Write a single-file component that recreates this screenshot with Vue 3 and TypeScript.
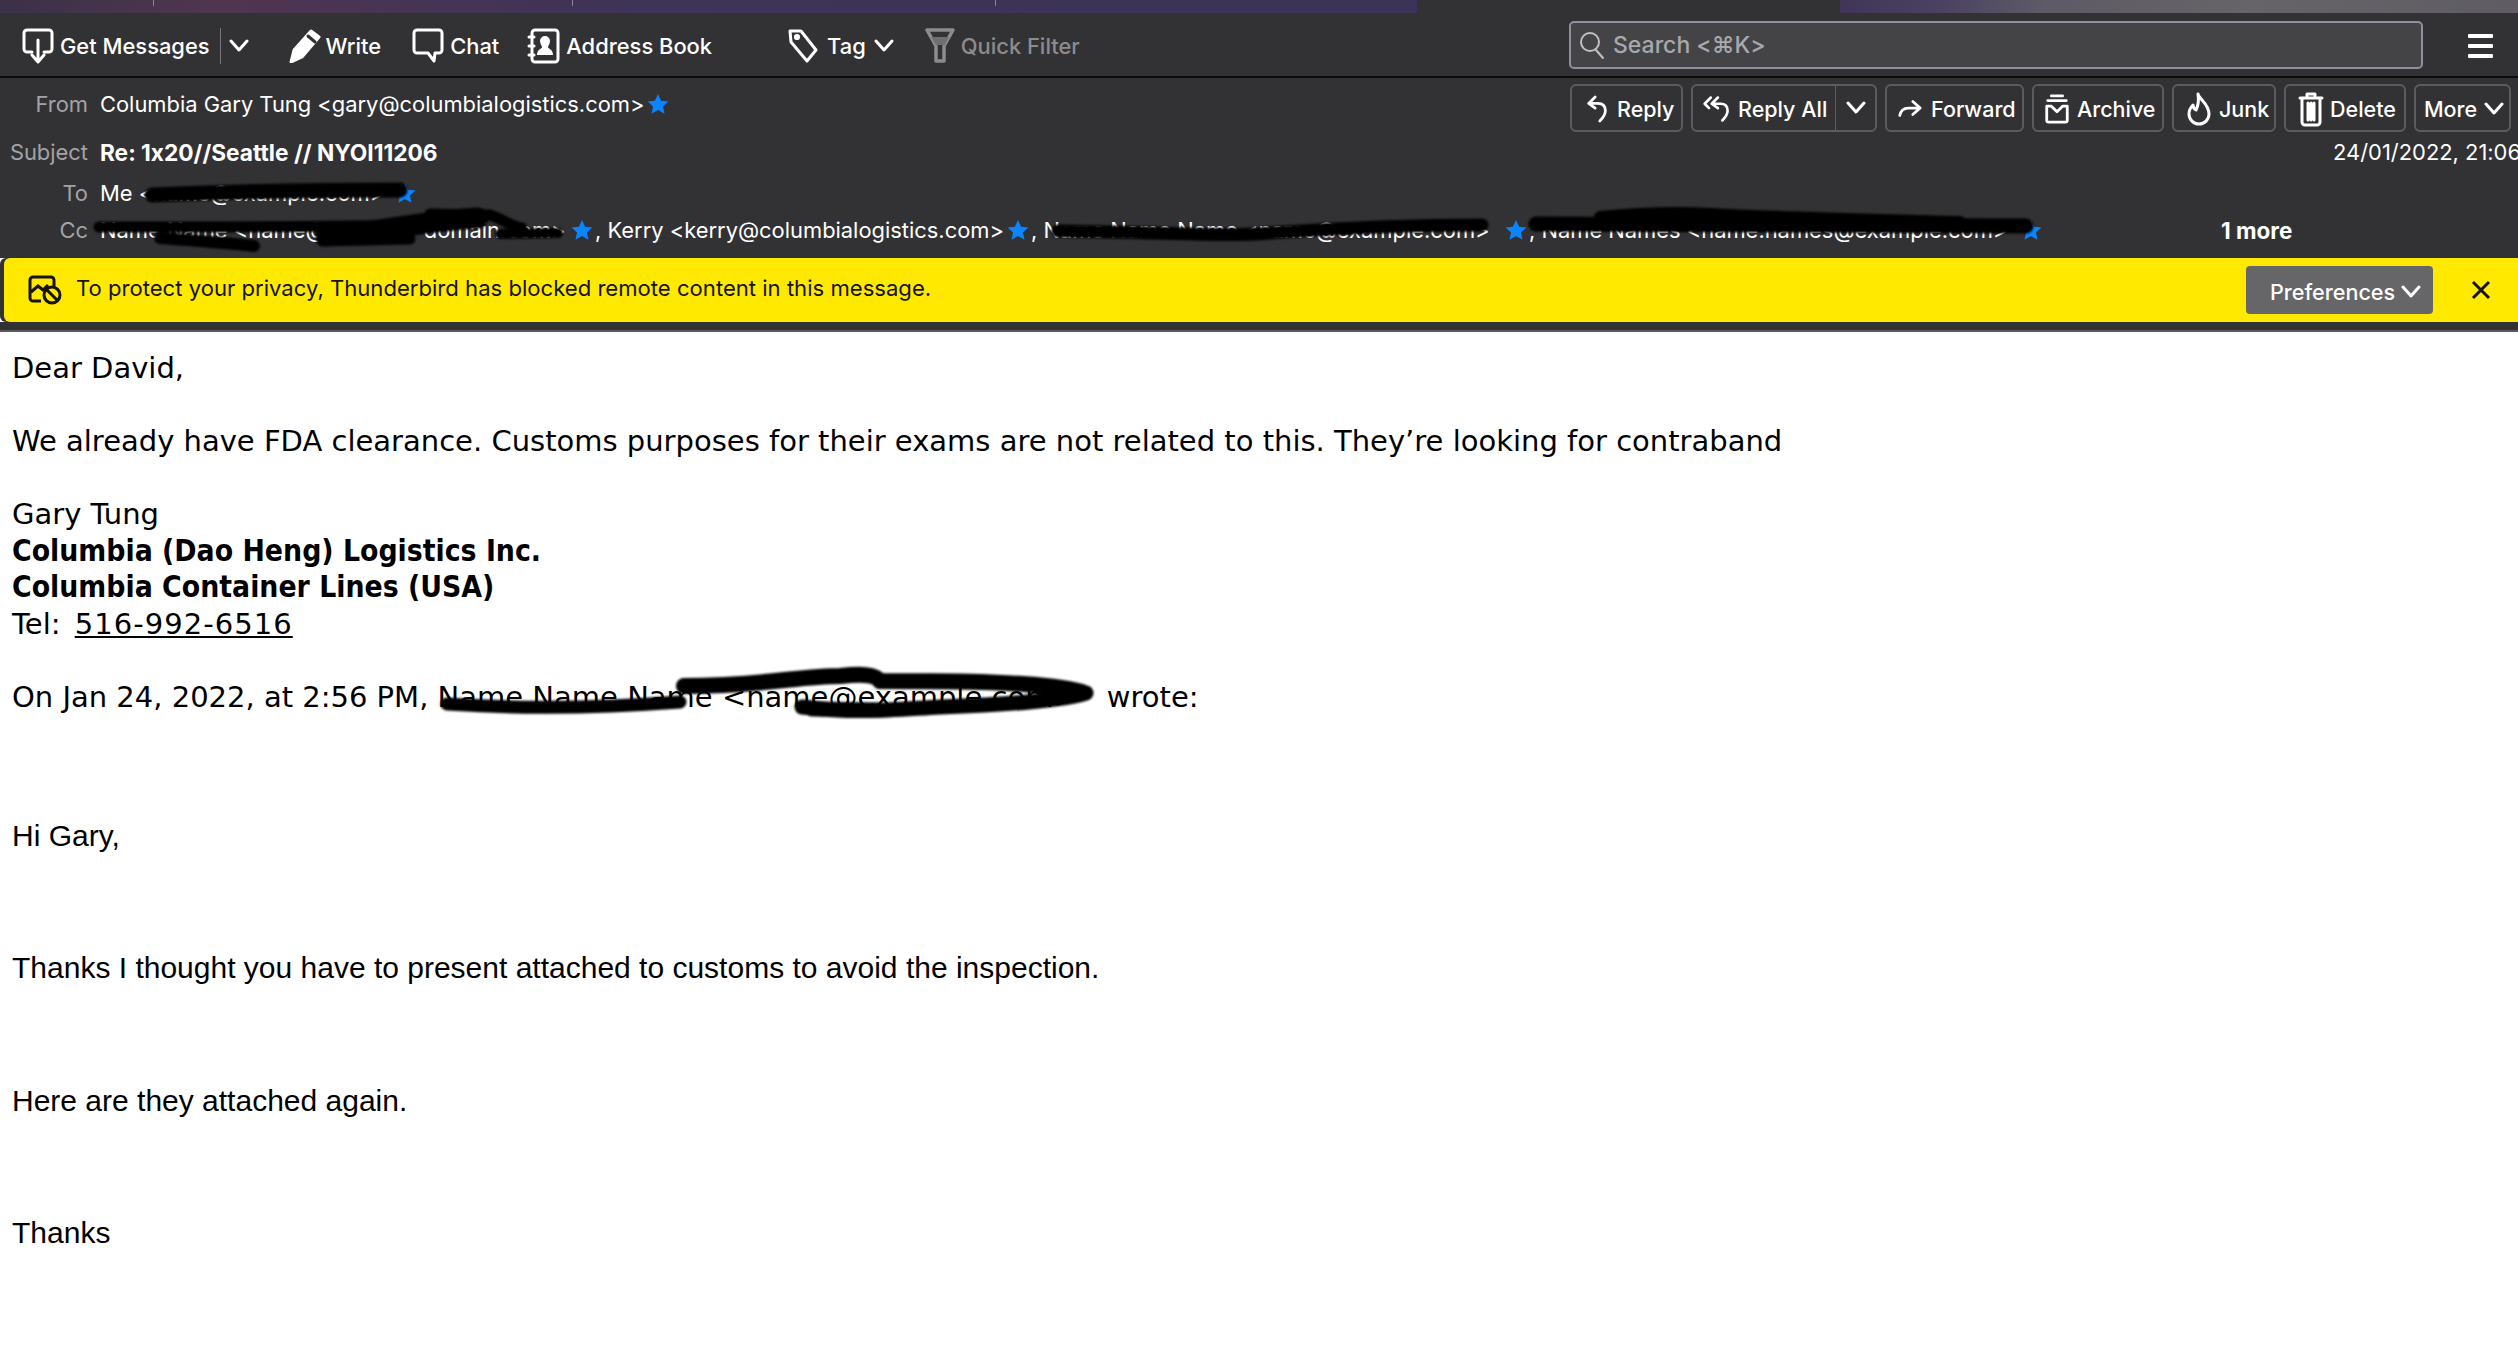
<script setup lang="ts">
interface Act { label: string; icon: string; width: number; split?: boolean }
const actions: Act[] = [
  { label: 'Reply', icon: 'reply', width: 113 },
  { label: 'Reply All', icon: 'replyall', width: 186, split: true },
  { label: 'Forward', icon: 'forward', width: 139 },
  { label: 'Archive', icon: 'archive', width: 132 },
  { label: 'Junk', icon: 'junk', width: 104 },
  { label: 'Delete', icon: 'delete', width: 122 },
  { label: 'More', icon: 'more', width: 97 },
]
const body2 = ['Hi Gary,', 'Thanks I thought you have to present attached to customs to avoid the inspection.', 'Here are they attached again.', 'Thanks']
</script>

<template>
  <div class="page">
    <div class="titlebar">
      <div class="strip left"><i class="tick" style="margin-left:153px"></i><i class="tick" style="margin-left:418px"></i><i class="tick" style="margin-left:422px"></i></div>
      <div class="strip gap"></div>
      <div class="strip right"></div>
    </div>

    <div class="toolbar">
      <div class="tool first">
        <svg width="34" height="36" viewBox="0 0 34 36" class="ic"><path d="M11 24H6a3 3 0 0 1-3-3V5a3 3 0 0 1 3-3h22a3 3 0 0 1 3 3v16a3 3 0 0 1-3 3h-5M17 12v21M11 27l6 7 6-7" /></svg>
        <span>Get Messages</span>
      </div>
      <i class="tooldiv"></i>
      <svg class="chev tchev" width="20" height="14" viewBox="0 0 20 14"><path d="M2 2l8 9 8-9" /></svg>
      <div class="tool write">
        <svg width="32" height="34" viewBox="0 0 32 34" class="ic"><path class="fill" d="M22 2l8 6-17 20-11 5 3-12z" /><path class="cut" d="M19 7l7 6" /></svg>
        <span>Write</span>
      </div>
      <div class="tool chat">
        <svg width="34" height="36" viewBox="0 0 34 36" class="ic"><path d="M6 2h22a3 3 0 0 1 3 3v17a3 3 0 0 1-3 3h-4l-1 8-6-8H6a3 3 0 0 1-3-3V5a3 3 0 0 1 3-3z" /></svg>
        <span>Chat</span>
      </div>
      <div class="tool book">
        <svg width="34" height="36" viewBox="0 0 34 36" class="ic"><rect x="5" y="2" width="26" height="32" rx="3" /><path class="fill nostroke" d="M18 8a5 5 0 0 1 5 5c0 3-2 5-2 6 0 2 5 2 5 8H10c0-6 5-6 5-8 0-1-2-3-2-6a5 5 0 0 1 5-5z" /><path d="M2 9h5M2 18h5M2 27h5" /></svg>
        <span>Address Book</span>
      </div>
      <div class="tool tag">
        <svg width="32" height="36" viewBox="0 0 32 36" class="ic"><path d="M3 3h11l15 19-9 11L4 14z" /><circle cx="10" cy="9" r="1.6" /></svg>
        <span>Tag</span>
        <svg class="chev" width="20" height="14" viewBox="0 0 20 14"><path d="M2 2l8 9 8-9" /></svg>
      </div>
      <div class="tool filter">
        <svg width="30" height="36" viewBox="0 0 30 36" class="filt"><path d="M2 2h26l-9 16v15h-8V18z" /><path class="shade" d="M6 9h18l-5 9v-1h-8z" /></svg>
        <span>Quick Filter</span>
      </div>
      <div class="search">
        <svg width="26" height="30" viewBox="0 0 26 30" class="srch"><circle cx="11" cy="12" r="9" /><path d="M17 20l7 8" /></svg>
        <span>Search &lt;⌘K&gt;</span>
      </div>
      <div class="burger"><i></i><i></i><i></i></div>
    </div>
    <div class="rule"></div>

    <div class="header">
      <div class="left-col">
        <div class="row r-from"><span class="lab">From</span><span class="val">Columbia Gary Tung &lt;gary@columbialogistics.com&gt;</span><svg class="star" width="22" height="22" viewBox="0 0 24 24"><path d="M12 1l3.400 7.400 8 .9-6 5.400 1.700 8L12 18.600l-7.100 4.100 1.700-8-6-5.400 8-.9z" /></svg></div>
        <div class="row r-subj"><span class="lab">Subject</span><span class="val subj">Re: 1x20//Seattle // NYOI11206</span></div>
        <div class="row r-to"><span class="lab">To</span><span class="val to-val">Me &lt;name@example.com&gt;</span><svg class="star" width="22" height="22" viewBox="0 0 24 24"><path d="M12 1l3.400 7.400 8 .9-6 5.400 1.700 8L12 18.600l-7.100 4.100 1.700-8-6-5.400 8-.9z" /></svg></div>
      </div>
      <div class="right-col">
        <div class="actions">
          <div v-for="a in actions" :key="a.label" class="act" :class="'a-' + a.icon" :style="{ width: a.width + 'px' }">
            <svg v-if="a.icon === 'reply'" width="26" height="30" viewBox="0 0 28 30" class="ic"><path d="M12 2L5 9l7 5M5 9h10c6 0 8 4 8 8 0 4-3 8-6 11" /></svg>
            <svg v-else-if="a.icon === 'replyall'" width="30" height="30" viewBox="0 0 34 30" class="ic"><path d="M10 2L3 9l5 5M18 2l-7 7 7 5M11 9h10c6 0 8 4 8 8 0 4-3 8-6 11" /></svg>
            <svg v-else-if="a.icon === 'forward'" width="26" height="24" viewBox="0 0 28 24" class="ic"><path d="M17 4l8 7-8 7M25 11H12c-5 0-8 3-9 8" /></svg>
            <svg v-else-if="a.icon === 'archive'" width="28" height="32" viewBox="0 0 30 32" class="ic"><path d="M9 2h12M5 7h20M4 13h5l6 6 6-6h5v15a2 2 0 0 1-2 2H6a2 2 0 0 1-2-2z" /></svg>
            <svg v-else-if="a.icon === 'junk'" width="26" height="34" viewBox="0 0 26 34" class="ic"><path d="M12 2c1 5 11 10 11 20a10 10 0 0 1-20 0c0-4 2-7 4-9 0 3 1 4 3 5 2-4 3-10 2-16z" /></svg>
            <svg v-else-if="a.icon === 'delete'" width="26" height="36" viewBox="0 0 26 36" class="ic"><path d="M2 7h22M9 7V3h8v4M4 7v24a3 3 0 0 0 3 3h12a3 3 0 0 0 3-3V7M10 12v17M13 12v17M16 12v17" /></svg>
            <span>{{ a.label }}</span>
            <svg v-if="a.icon === 'more'" class="chev" width="20" height="14" viewBox="0 0 20 14"><path d="M2 2l8 9 8-9" /></svg>
            <template v-if="a.split"><i class="split"></i><svg class="chev splitchev" width="20" height="14" viewBox="0 0 20 14"><path d="M2 2l8 9 8-9" /></svg></template>
          </div>
        </div>
        <div class="date">24/01/2022, 21:06</div>
      </div>
    </div>

    <div class="cc-row">
      <span class="lab">Cc</span>
      <span class="val cc1">Name Name &lt;name@example-domain.com&gt;</span>
      <svg class="star" width="22" height="22" viewBox="0 0 24 24"><path d="M12 1l3.400 7.400 8 .9-6 5.400 1.700 8L12 18.600l-7.100 4.100 1.700-8-6-5.400 8-.9z" /></svg>
      <span class="val cc2">, Kerry &lt;kerry@columbialogistics.com&gt;</span>
      <svg class="star" width="22" height="22" viewBox="0 0 24 24"><path d="M12 1l3.400 7.400 8 .9-6 5.400 1.700 8L12 18.600l-7.100 4.100 1.700-8-6-5.400 8-.9z" /></svg>
      <span class="val cc3">, Name Name Name &lt;name@example.com&gt;</span>
      <svg class="star" width="22" height="22" viewBox="0 0 24 24"><path d="M12 1l3.400 7.400 8 .9-6 5.400 1.700 8L12 18.600l-7.100 4.100 1.700-8-6-5.400 8-.9z" /></svg>
      <span class="val cc4">, Name Names &lt;name.names@example.com&gt;</span>
      <svg class="star" width="22" height="22" viewBox="0 0 24 24"><path d="M12 1l3.400 7.400 8 .9-6 5.400 1.700 8L12 18.600l-7.100 4.100 1.700-8-6-5.400 8-.9z" /></svg>
      <b class="more">1 more</b>
    </div>

    <div class="notice">
      <svg class="nic" width="34" height="30" viewBox="0 0 34 30"><path d="M13 26H5a3 3 0 0 1-3-3V5a3 3 0 0 1 3-3h18a3 3 0 0 1 3 3v6M3 17l7-6 5 4 5-5" /><circle cx="24" cy="20" r="8" /><path d="M18 14l12 12" /></svg>
      <span class="ntext">To protect your privacy, Thunderbird has blocked remote content in this message.</span>
      <div class="prefs"><span>Preferences</span><svg class="chev" width="20" height="14" viewBox="0 0 20 14"><path d="M2 2l8 9 8-9" /></svg></div>
      <svg class="close" width="20" height="20" viewBox="0 0 20 20"><path d="M2 2l16 16M18 2L2 18" /></svg>
    </div>
    <div class="sep"></div>

    <div class="mail">
      <div class="plain">
        <div>Dear David,</div>
        <div class="blank"></div>
        <div>We already have FDA clearance. Customs purposes for their exams are not related to this. They’re looking for contraband</div>
        <div class="blank"></div>
        <div>Gary Tung</div>
        <div><b>Columbia (Dao Heng) Logistics Inc.</b></div>
        <div><b>Columbia Container Lines (USA)</b></div>
        <div>Tel: <u>516-992-6516</u></div>
        <div class="blank"></div>
        <div>On Jan 24, 2022, at 2:56 PM, <span class="redacted">Name Name Name &lt;name@example.com&gt;</span> wrote:</div>
      </div>
      <div class="html">
        <p v-for="t in body2" :key="t">{{ t }}</p>
      </div>
    </div>

    <svg class="scribbles" width="2518" height="760" viewBox="0 0 2518 760">
      <g fill="none" stroke="#000" stroke-linecap="round" stroke-linejoin="round" filter="url(#bl)">
        <path stroke-width="15" d="M152 195C220 192 300 190 400 190" />
        <path stroke-width="11" d="M99 227C200 227 320 227 420 225" />
        <path stroke-width="12" d="M160 238C200 241 240 244 254 246" />
        <path stroke-width="21" d="M326 236C380 232 430 220 478 218" />
        <path stroke-width="11" d="M322 241 410 239M430 214 490 215C505 220 510 226 522 228" />
        <path stroke-width="10" d="M500 234 558 233" />
        <path stroke-width="13" d="M1058 231C1150 232 1230 237 1270 233 1340 228 1420 225 1482 225" />
        <path stroke-width="15" d="M1536 224 2026 226" />
        <path stroke-width="12" d="M1600 217C1640 213 1680 212 1710 214 1760 217 1850 219 1960 222" />
        <path stroke-width="13" d="M447 704C520 709 600 708 680 702" />
        <path stroke-width="16" d="M684 686C760 686 800 676 840 676 860 674 875 674 880 681 950 681 1040 681 1082 692" />
        <path stroke-width="15" d="M802 707C860 714 900 709 940 707 1000 705 1060 701 1086 693" />
        <path stroke-width="15" d="M812 709 880 710" />
      </g>
      <filter id="bl"><feGaussianBlur stdDeviation="1.2" /></filter>
    </svg>
  </div>
</template>

<style>
html, body { margin: 0; background: #fff; overflow: hidden; }
</style>
<style scoped>
.page { position: relative; width: 2518px; height: 1352px; overflow: hidden; background: #fff; font-family: Inter, "Liberation Sans", sans-serif; font-feature-settings: "calt" 0; color: #fff; }
.titlebar { display: flex; height: 13px; background: #323234; }
.strip { height: 100%; display: flex; align-items: flex-start; }
.strip.left { width: 1417px; background: linear-gradient(90deg, #3b3148 0, #4f3550 15%, #3e3358 45%, #3c3358 100%); }
.strip.gap { width: 423px; }
.strip.right { flex: 1; background: linear-gradient(90deg, #403558 0, #4b4262 15%, #5e5a66 30%, #666468 60%, #5f5c64 100%); }
.tick { width: 1px; height: 6px; background: #8a8296; }
.toolbar { display: flex; align-items: center; height: 63px; box-sizing: border-box; padding-top: 2px; background: #323234; font-size: 21.900px; font-weight: 500; position: relative; }
.tool { display: flex; align-items: center; gap: 5px; white-space: nowrap; }
.first { margin-left: 21px; }
.write { margin-left: 40px; }
.chat { margin-left: 30px; }
.book { margin-left: 28px; }
.tag { margin-left: 75px; gap: 8px; }
.filter { margin-left: 31px; gap: 6px; color: #8c8c8f; }
.ic { fill: none; stroke: #fff; stroke-width: 3; stroke-linecap: round; stroke-linejoin: round; flex: none; }
.ic .fill { fill: #fff; }
.ic .nostroke { stroke: none; }
.ic .cut { stroke: #323234; }
.chev { fill: none; stroke: #fff; stroke-width: 3; stroke-linecap: round; stroke-linejoin: round; flex: none; }
.tooldiv { width: 1px; height: 36px; background: #77777a; margin-left: 10px; }
.tchev { margin-left: 8px; }
.filt { fill: none; stroke: #8c8c8f; stroke-width: 3.500; stroke-linejoin: round; flex: none; }
.filt .shade { fill: #6f6f72; stroke: none; }
.search { display: flex; align-items: center; gap: 8px; position: absolute; left: 1569px; top: 8px; width: 854px; height: 48px; box-sizing: border-box; border: 2px solid #8f8f9d; border-radius: 5px; background: #444446; padding-left: 8px; color: #a8a8ad; font-weight: 500; font-size: 23px; }
.srch { fill: none; stroke: #c0c0c4; stroke-width: 2; stroke-linecap: round; }
.burger { position: absolute; left: 2468px; top: 21px; display: flex; flex-direction: column; gap: 6px; }
.burger i { display: block; width: 25px; height: 4px; border-radius: 1px; background: #fff; }
.rule { height: 2px; background: #0c0c0d; }
.header { display: flex; justify-content: space-between; background: #323234; height: 138px; font-size: 21.900px; }
.row { display: flex; align-items: center; white-space: nowrap; }
.lab { color: #a3a3a6; width: 88px; text-align: right; flex: none; }
.val { margin-left: 12px; white-space: nowrap; font-weight: 400; }
.subj { font-weight: 700; font-size: 22.700px; }
.star { fill: #0a84ff; flex: none; margin-left: 3px; }
.r-from { margin-top: 11px; height: 30px; }
.r-subj { margin-top: 17px; height: 32px; }
.r-to { margin-top: 10px; height: 30px; }
.to-val { width: 291px; overflow: hidden; }
.right-col { width: 948px; }
.actions { display: flex; gap: 8px; margin-top: 6px; }
.act { position: relative; display: flex; align-items: center; gap: 7px; box-sizing: border-box; height: 48px; padding: 2px 0 0 12px; border: 2px solid #5c5c5f; border-radius: 6px; font-size: 21.500px; font-weight: 500; white-space: nowrap; }
.a-replyall { gap: 6px; padding-left: 9px; }
.a-forward { padding-left: 10px; gap: 8px; }
.a-archive { padding-left: 9px; gap: 6px; }
.a-delete { gap: 6px; }
.a-more { padding-left: 8px; }
.split { position: absolute; left: 142px; top: 0; bottom: 0; width: 1px; background: #5c5c5f; }
.splitchev { position: absolute; left: 153px; top: 15px; }
.date { text-align: right; margin-top: 7px; margin-right: -3px; font-size: 21.900px; font-weight: 400; white-space: nowrap; }
.cc-row { display: flex; align-items: center; height: 42px; box-sizing: border-box; padding-bottom: 14px; background: #323234; font-size: 21.900px; white-space: nowrap; position: relative; }
.cc1 { width: 468px; overflow: hidden; }
.cc2 { margin-left: 2px; }
.cc3 { width: 471px; overflow: hidden; margin-left: 2px; }
.cc4 { width: 488px; overflow: hidden; margin-left: 2px; }
.more { position: absolute; left: 2221px; font-weight: 700; font-size: 22.500px; }
.notice { display: flex; align-items: center; height: 64px; margin-left: 4px; background: #ffe900; border-radius: 6px 0 0 6px; color: #15141a; font-size: 22px; position: relative; }
.page .notice { box-shadow: -4px 0 0 #323234; }
.nic { fill: none; stroke: #15141a; stroke-width: 3; margin-left: 24px; flex: none; }
.ntext { margin: -5px 0 0 14px; font-weight: 400; font-size: 22.100px; }
.prefs { position: absolute; left: 2242px; top: 8px; width: 187px; height: 48px; box-sizing: border-box; display: flex; align-items: center; gap: 6px; padding: 3px 0 0 24px; background: #666668; border-radius: 4px; color: #fff; font-weight: 500; font-size: 21.600px; }
.close { position: absolute; left: 2467px; top: 22px; fill: none; stroke: #15141a; stroke-width: 3; }
.sep { height: 10px; background: linear-gradient(#323234 0 8px, #5a5a60 8px 10px); }
.mail { padding: 18px 0 0 12px; color: #000; }
.plain { font-family: "DejaVu Sans", sans-serif; font-size: 29px; line-height: 36.500px; white-space: nowrap; }
.plain b { font-family: "DejaVu Sans Condensed", "DejaVu Sans", sans-serif; font-size: 29.800px; font-stretch: condensed; }
.plain u { letter-spacing: 1.050px; margin-left: 5px; }
.blank { height: 36.500px; }
.redacted { display: inline-block; width: 660px; overflow: hidden; vertical-align: bottom; white-space: nowrap; }
.html { font-family: "Liberation Sans", Arial, sans-serif; font-size: 30px; line-height: 36px; margin-top: 103px; }
.html p { margin: 0 0 96.300px; }
.scribbles { position: absolute; left: 0; top: 0; pointer-events: none; }
</style>
